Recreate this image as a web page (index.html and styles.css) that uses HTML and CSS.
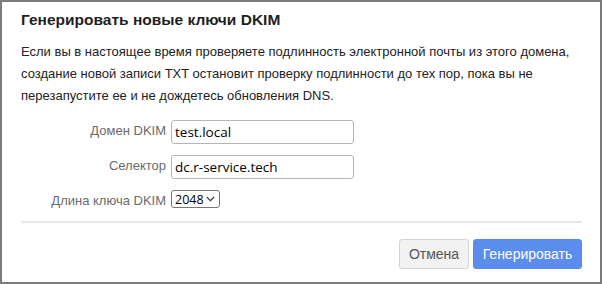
FILE: index.html
```html
<!DOCTYPE html>
<html lang="ru">
<head>
<meta charset="utf-8">
<link rel="stylesheet" href="styles.css">
</head>
<body>
<div class="dialog">
  <h1 class="title">Генерировать новые ключи DKIM</h1>
  <p class="desc">Если вы в настоящее время проверяете подлинность электронной почты из этого домена, создание новой записи TXT остановит проверку подлинности до тех пор, пока вы не перезапустите ее и не дождетесь обновления DNS.</p>
  <div class="form">
    <label class="label">Домен DKIM</label>
    <input class="field" type="text" value="test.local">
    <label class="label">Селектор</label>
    <input class="field" type="text" value="dc.r-service.tech">
    <label class="label">Длина ключа DKIM</label>
    <div class="select-wrap">
      <div class="select"><span>2048</span><svg class="chev" width="9" height="6" viewBox="0 0 9 6"><path d="M0.8 1 L4.5 4.7 L8.2 1" fill="none" stroke="#333" stroke-width="1.1"/></svg></div>
    </div>
  </div>
  <div class="divider"></div>
  <div class="footer">
    <button class="btn btn-cancel">Отмена</button>
    <button class="btn btn-primary">Генерировать</button>
  </div>
</div>
</body>
</html>
```
FILE: styles.css
```css
html, body {
  margin: 0;
  padding: 0;
  background: #fff;
}
.dialog {
  box-sizing: border-box;
  width: 602px;
  height: 284px;
  border: 2px solid #7b7b7b;
  font-family: "Liberation Sans", Arial, sans-serif;
  color: #222;
  padding: 0 18px 0 19px;
}
.title {
  margin: 0;
  padding-top: 8px;
  font-size: 15.5px;
  line-height: 20px;
  font-weight: bold;
  color: #1f1f1f;
}
.desc {
  margin: 11px 0 0;
  font-size: 13px;
  line-height: 22px;
  color: #222;
}
.form {
  display: grid;
  grid-template-columns: 145px 183px;
  column-gap: 5px;
  row-gap: 11px;
  margin-top: 13px;
  align-items: start;
}
.label {
  text-align: right;
  font-size: 13px;
  color: #6a6a6a;
  padding-top: 3px;
  line-height: 16px;
}
.field {
  box-sizing: border-box;
  width: 183px;
  height: 24px;
  margin: 0;
  border: 1px solid #b5b5b5;
  border-radius: 3px;
  padding: 0 3px;
  font-family: "Open Sans", "Noto Sans", sans-serif;
  font-size: 13.5px;
  color: #000;
  background: #fff;
}
.select-wrap {
  display: flex;
}
.select {
  box-sizing: border-box;
  height: 18px;
  width: 49px;
  border: 1px solid #767676;
  border-radius: 3px;
  display: flex;
  align-items: center;
  justify-content: space-between;
  padding: 0 4px 0 3px;
  font-family: "Open Sans", "Noto Sans", sans-serif;
  font-size: 12.5px;
  color: #000;
}
.divider {
  height: 2px;
  background: #e6e6ea;
  margin-top: 12px;
}
.footer {
  display: flex;
  justify-content: flex-end;
  gap: 4px;
  margin-top: 16px;
}
.btn {
  height: 30px;
  border-radius: 3px;
  font-family: "Liberation Sans", Arial, sans-serif;
  font-size: 14px;
  padding: 0 8px;
  margin: 0;
  cursor: pointer;
}
.btn-cancel {
  background: #f2f2f2;
  border: 1px solid #d4d4d4;
  color: #555;
  width: 70px;
}
.btn-primary {
  background: #5b8def;
  border: 1px solid #5a8aea;
  color: #fff;
  width: 109px;
}
```
